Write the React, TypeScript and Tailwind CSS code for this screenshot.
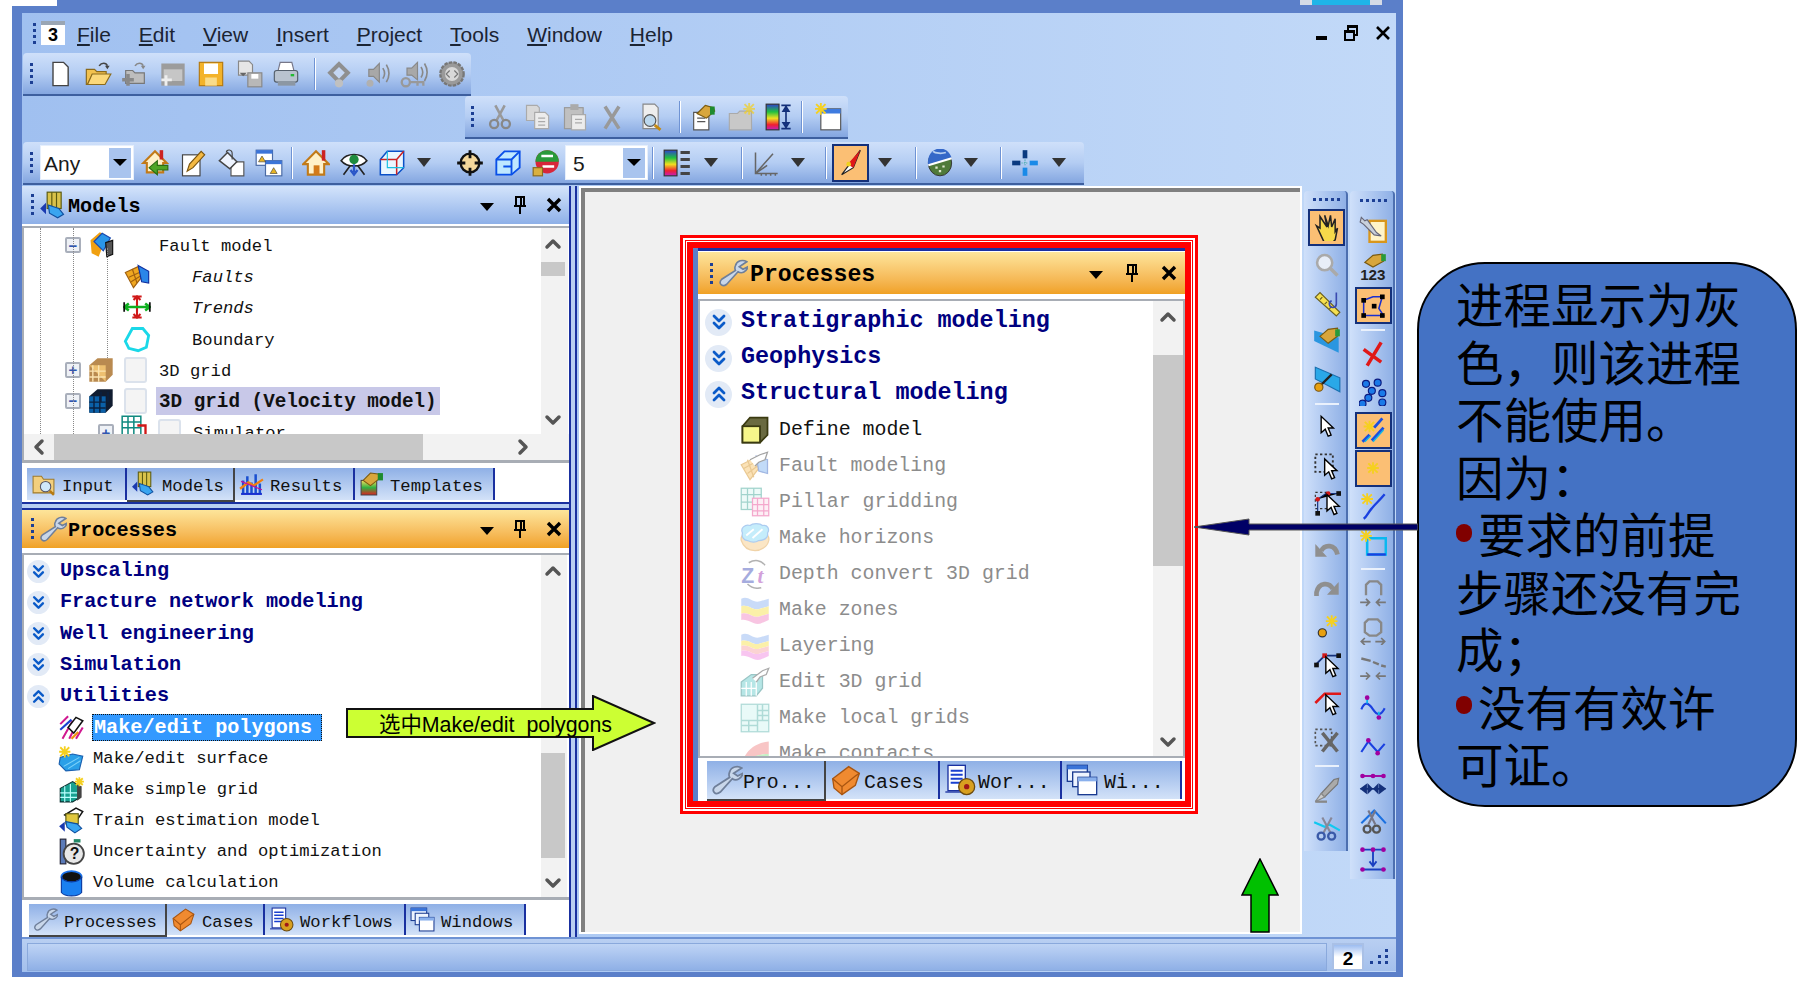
import React from "react";
import { ChevronUp, ChevronDown, ChevronLeft, ChevronRight, ChevronsDown, ChevronsUp } from "lucide-react";

const burst = (x: number, y: number, s = 4) => (
  <g stroke="#f5d020" strokeWidth="1.6">
    <path d={`M${x - s} ${y}H${x + s}M${x} ${y - s}V${y + s}M${x - s + 1} ${y - s + 1}L${x + s - 1} ${y + s - 1}M${x + s - 1} ${y - s + 1}L${x - s + 1} ${y + s - 1}`} />
  </g>
);
const cursor = (x: number, y: number) => (
  <path d={`M${x} ${y}v14l3.5-3 2.5 6 2.5-1-2.5-6h4.5z`} fill="#fff" stroke="#000" strokeWidth="1.2" />
);
const node = (x: number, y: number, c = "#a000a0") => <circle cx={x} cy={y} r="2" fill={c} />;
const grayF = "#a8a8a8";

const icons: Record<string, React.ReactNode> = {
  doc: <path d="M6 2h9l4 4v16H6z" fill="#fff" stroke="#444" strokeWidth="1.2" />,
  open: <><path d="M2 8h7l2 2h8v3H7L3 21H2z" fill="#f2c14e" stroke="#8a6a1c" /><path d="M7 12h16l-5 9H3z" fill="#fbd87a" stroke="#8a6a1c" /><path d="M13 5c2-3 6-3 7 0" fill="none" stroke="#444" strokeWidth="1.4" /><path d="M18 5h4l-2 3z" fill="#444" /></>,
  openAdd: <><path d="M4 9h6l2 2h8v9H4z" fill="#bdbdbd" stroke="#777" /><path d="M12 5c2-3 6-3 7 0" fill="none" stroke="#888" strokeWidth="1.4" /><path d="M17 5h4l-2 3z" fill="#888" /><path d="M1 17h10M6 12v10" stroke="#888" strokeWidth="3" /></>,
  folderGray: <><rect x="2" y="3" width="20" height="19" fill="#9c9c9c" /><path d="M4 8h16v10H4z" fill="#c6c6c6" /><path d="M2 17h9M6 13v9" stroke="#eee" strokeWidth="2.5" /></>,
  save: <><rect x="2" y="2" width="20" height="20" fill="#f3b32a" stroke="#b57a10" /><rect x="6" y="3" width="12" height="9" fill="#fff" /><rect x="7" y="15" width="10" height="7" fill="#f9dc8a" /></>,
  saveAs: <><path d="M3 1h9l3 3v9H3z" fill="#e6e6e6" stroke="#888" /><rect x="11" y="11" width="12" height="12" fill="#b8b8b8" stroke="#888" /><rect x="14" y="12" width="6" height="4" fill="#fff" /><path d="M7 7v7l-3-3h6l-3 3" fill="#666" /></>,
  print: <><path d="M7 2h10l2 8H5z" fill="#fff" stroke="#778" /><rect x="2" y="9" width="20" height="10" rx="2" fill="#b9c3cf" stroke="#55606c" /><rect x="5" y="18" width="15" height="4" fill="#8c97a3" /><rect x="16" y="12" width="3" height="2" fill="#22bb33" /></>,
  diamonds: <><path d="M12 1l10 10-10 10L2 11z" fill="#8f8f8f" /><path d="M12 6l5 5-5 5-5-5z" fill="#c4d6f3" /><circle cx="12" cy="20" r="3.5" fill="#c0c0c0" /></>,
  speaker: <><path d="M5 8h4l5-5v16l-5-5H5z" fill={grayF} stroke="#888" /><path d="M17 7c2 3 2 6 0 9M20 4c3 5 3 10 0 15" fill="none" stroke="#888" strokeWidth="1.4" /><circle cx="6" cy="20" r="3" fill="#b0b0b0" /></>,
  speakerKey: <><path d="M6 7h4l5-5v15l-5-4H6z" fill={grayF} stroke="#888" /><path d="M18 6c2 3 2 6 0 9M21 3c3 5 3 10 0 15" fill="none" stroke="#888" strokeWidth="1.4" /><circle cx="5" cy="19" r="3.5" fill="none" stroke="#999" strokeWidth="2" /><path d="M8 19h12v3M15 19v3" stroke="#999" strokeWidth="2" fill="none" /></>,
  gear: <><circle cx="12" cy="12" r="10" fill="#9a9a9a" stroke="#777" strokeDasharray="3 1" strokeWidth="2" /><circle cx="12" cy="12" r="6" fill="#d9d9d9" /><path d="M10 9l-3 3 3 3M14 9l3 3-3 3" stroke="#777" fill="none" /></>,
  cut: <><path d="M8 2l7 13M16 2L9 15" stroke="#999" strokeWidth="2.2" /><circle cx="7" cy="18" r="3.5" fill="none" stroke="#888" strokeWidth="2" /><circle cx="17" cy="18" r="3.5" fill="none" stroke="#888" strokeWidth="2" /></>,
  copy: <><path d="M3 2h9l2 2v11H3z" fill="#d8d8d8" stroke="#aaa" /><path d="M10 8h9l3 3v11H10z" fill="#ececec" stroke="#aaa" /><path d="M13 13h6M13 16h6M13 19h6" stroke="#aaa" /></>,
  paste: <><rect x="3" y="4" width="16" height="18" fill="#c0c0c0" stroke="#999" /><rect x="8" y="1" width="7" height="5" fill="#aaa" /><path d="M9 10h12v13H9z" fill="#ececec" stroke="#aaa" /><path d="M12 14h6M12 17h6" stroke="#aaa" /></>,
  xGray: <path d="M6 3l12 19M18 3L6 22" stroke="#999" strokeWidth="3" />,
  preview: <><path d="M6 1h10l3 3v18H6z" fill="#eee" stroke="#888" /><circle cx="12" cy="15" r="5" fill="#bcd8ee" stroke="#555" /><path d="M16 19l5 4" stroke="#c58a10" strokeWidth="2.4" /></>,
  templ: <><path d="M4 8h13v15H4z" fill="#fff" stroke="#555" /><path d="M7 13h7M7 16h7" stroke="#555" /><path d="M7 9l7-7 7 2 1 3-7 6z" fill="#d8a63c" stroke="#7a5a10" /><rect x="18" y="3" width="4" height="7" fill="#1e8b2e" /></>,
  folderNew: <><path d="M2 9h7l2-2h10v16H2z" fill="#c8c8c8" stroke="#aaa" /><g opacity="0.7">{burst(19, 5, 5)}</g></>,
  colorScale: <><defs><linearGradient id="rb" x1="0" y1="0" x2="0" y2="1"><stop offset="0" stopColor="#3040d0" /><stop offset=".3" stopColor="#20c040" /><stop offset=".55" stopColor="#f0e020" /><stop offset=".8" stopColor="#f02030" /><stop offset="1" stopColor="#c020c0" /></linearGradient></defs><rect x="1" y="1" width="11" height="22" fill="url(#rb)" stroke="#333" /><path d="M14 2h8M14 22h8M18 3v18M15.5 7L18 3l2.500 4zM15.500 17L18 21l2.500-4z" stroke="#14307a" strokeWidth="1.4" fill="#2a56c8" /></>,
  newWin: <><rect x="5" y="5" width="17" height="18" fill="#fff" stroke="#555" /><rect x="5" y="5" width="17" height="4" fill="#3e7be0" />{burst(5, 5, 5)}</>,
  homeArrow: <><path d="M2 12L12 2l10 10h-3v8H5v-8z" fill="#fff1c9" stroke="#c27a18" strokeWidth="1.8" /><rect x="16" y="1" width="3" height="8" fill="#c22" /><path d="M23 14h-9v-4L7 16l7 6v-4h9z" fill="#4ea526" stroke="#2b6b12" /></>,
  edit: <><rect x="3" y="5" width="15" height="18" fill="#fff" stroke="#444" /><path d="M7 19l2-6L19 2l3 3-10 11z" fill="#f4b942" stroke="#7a5510" /></>,
  paint: <><path d="M12 11h11v12H12z" fill="#fff" stroke="#555" /><path d="M2 10l7-7 8 8-6 6z" fill="#eef4ff" stroke="#444" strokeWidth="1.3" /><path d="M8 3c0-3 5-3 5 1v5" fill="none" stroke="#444" /></>,
  windows: <><rect x="1" y="1" width="14" height="13" fill="#fff" stroke="#4a6aa5" /><rect x="1" y="1" width="14" height="3" fill="#3b74d8" /><rect x="9" y="10" width="14" height="13" fill="#fff" stroke="#4a6aa5" /><rect x="9" y="10" width="14" height="3" fill="#3b74d8" /><path d="M3 11l3-5 3 5zM13 21l3-5 3 5z" fill="#e7b321" stroke="#333" strokeWidth=".5" /></>,
  house: <><path d="M1 13L12 2l11 11h-4v9H5v-9z" fill="#fff1c9" stroke="#c27a18" strokeWidth="1.8" /><rect x="17" y="1" width="3" height="9" fill="#c22" /><rect x="10" y="14" width="5" height="8" fill="#d37a1a" /></>,
  eye: <><path d="M1 10c5-7 17-7 22 0-5 6-17 6-22 0z" fill="#fff" stroke="#222" strokeWidth="1.4" /><circle cx="12" cy="9" r="4" fill="#1e8b3e" /><path d="M3 22l6-8M21 22l-6-8" stroke="#222" strokeWidth="1.4" /><path d="M12 13v7M9 18l3 4 3-4" stroke="#2a56c8" strokeWidth="2" fill="none" /></>,
  cube: <><path d="M2 9l6-7h14v14l-6 6H2z" fill="#eaf6ff" stroke="#0a50c8" strokeWidth="1.3" /><path d="M2 9h14v13M16 9l6-7" stroke="#c22" strokeWidth="1.3" fill="none" /><path d="M8 2v14h14" stroke="#1ac0e0" strokeWidth="1" fill="none" /></>,
  target: <><circle cx="12" cy="12" r="8" fill="#f4d79a" stroke="#111" strokeWidth="2" /><path d="M12 1v7M12 16v7M1 12h7M16 12h7" stroke="#111" strokeWidth="2.4" /></>,
  blueCube: <><path d="M2 9l7-7h13v14l-7 6H2z" fill="#bfe8ff" stroke="#0a50e8" strokeWidth="1.6" /><path d="M2 9h13v13M15 9l7-7M8 15h7" stroke="#0a50e8" strokeWidth="1.6" fill="none" /></>,
  ball: <><circle cx="13" cy="11" r="10" fill="#d8263a" /><path d="M3 11a10 10 0 0 1 20 0z" fill="#2a9a3a" /><path d="M8 6h10M9 15h10" stroke="#fff" strokeWidth="2" /><rect x="1" y="16" width="8" height="7" fill="#d9b040" stroke="#8a6a1c" /></>,
  colorList: <><rect x="1" y="1" width="11" height="22" fill="url(#rb)" stroke="#333" /><path d="M15 3h8M15 9h8M15 15h8M15 21h8" stroke="#444" strokeWidth="2.4" /></>,
  axes: <path d="M3 3v18h19M3 21L18 4M3 21l10-7M8 21v2M12 21v2M16 21v2M20 21v2" stroke="#666" strokeWidth="1.3" fill="none" />,
  compass: <><path d="M20 1L4 22l10-6z" fill="#fff" stroke="#222" /><path d="M20 1L9 13l5 3z" fill="#e01818" /><circle cx="10" cy="13" r="2" fill="#f0d020" /></>,
  globe: <><ellipse cx="12" cy="12" rx="10" ry="11" fill="#4f7a3a" stroke="#333" strokeWidth=".8" /><path d="M2 14A10 11 0 0 1 22 8z" fill="#3568c8" /><path d="M6 2c2 2 8 2 11 1" stroke="#b8d0f0" strokeWidth="1.500" fill="none" /><path d="M2 14L22 8" stroke="#fff" strokeWidth="1.800" /><path d="M8 16h2M14 15h2M11 19h2" stroke="#dfe8d0" strokeWidth="1.800" /></>,
  cross: <><rect x="10" y="1" width="4" height="7" fill="#0a3a80" /><rect x="10" y="16" width="4" height="7" fill="#1a8ae8" /><rect x="1" y="10" width="7" height="4" fill="#0a3a80" /><rect x="16" y="10" width="7" height="4" fill="#1a8ae8" /><path d="M9 12h6M12 9v6" stroke="#4aa" strokeDasharray="1 1" /></>,
  hand: <path d="M6 3l6 9-2-10 3 9 2-9 1 10 3-7 0 11 2-3-2 10-3 3H10L3 11l3 2z" fill="#f6d94a" stroke="#222" strokeWidth="1.300" />,
  magnifier: <><circle cx="10" cy="10" r="6.500" fill="#e8eef8" stroke="#aaa" strokeWidth="2.200" /><path d="M15 15l6 6" stroke="#aaa" strokeWidth="3" /></>,
  ruler: <><path d="M2 7l4-4 17 17-3 3z" fill="#f5e050" stroke="#6a6020" /><path d="M6 9l2-2M10 13l2-2M14 17l2-2" stroke="#6a6020" /><path d="M20 3v10M20 13a3 3 0 1 1-4-3" stroke="#3a4ab0" strokeWidth="1.400" fill="none" /></>,
  handSurface: <><path d="M1 12l21 10V9L1 3z" fill="#2a96e0" /><path d="M6 8l7-6 8-1 1 6-9 7z" fill="#d8a63c" stroke="#7a5a10" /><rect x="19" y="2" width="4" height="6" fill="#2a9a3a" /></>,
  arrowPlane: <><path d="M2 2l21 9v12L2 12z" fill="#2aa8e8" stroke="#1a70b0" /><path d="M6 18L16 8" stroke="#222" strokeWidth="2" /><circle cx="5" cy="19" r="3.500" fill="#e8a010" stroke="#7a5510" /></>,
  cursor: cursor(7, 2),
  selectCursor: <><rect x="2" y="2" width="15" height="15" fill="none" stroke="#333" strokeWidth="1.600" strokeDasharray="2 2" />{cursor(10, 6)}</>,
  nodeCursor: <><rect x="2" y="2" width="12" height="14" fill="none" stroke="#333" strokeDasharray="2 2" /><path d="M4 8v11M4 8l7-5h11" stroke="#14307a" /><rect x="2" y="18" width="4" height="4" fill="#111" /><rect x="20" y="1" width="4" height="4" fill="#111" /><circle cx="4" cy="8" r="2" fill="#d01818" /><circle cx="13" cy="3" r="2" fill="#d01818" />{cursor(12, 4)}</>,
  undo: <><path d="M7 12c3-6 12-6 14 3" stroke="#8f8f8f" strokeWidth="4" fill="none" /><path d="M2 6v11h10z" fill="#8f8f8f" /></>,
  redo: <><path d="M17 12c-3-6-12-6-14 3v3" stroke="#8f8f8f" strokeWidth="4" fill="none" /><path d="M22 6v11H12z" fill="#8f8f8f" /></>,
  dotStar: <><circle cx="8" cy="17" r="3.500" fill="#e8a010" stroke="#333" />{burst(16, 7, 5)}</>,
  nodeArrow: <><path d="M3 11l7-7h13" stroke="#14307a" strokeWidth="1.600" fill="none" /><rect x="1" y="10" width="4" height="4" fill="#111" /><rect x="20" y="2" width="4" height="4" fill="#111" /><rect x="8" y="2" width="4" height="4" fill="#d01818" />{cursor(11, 5)}</>,
  redArrow: <><path d="M2 12L10 4h14" stroke="#e01818" strokeWidth="2.200" fill="none" />{cursor(11, 5)}</>,
  dashX: <><rect x="2" y="2" width="14" height="14" fill="none" stroke="#555" strokeWidth="1.400" strokeDasharray="2 2" /><path d="M8 21L21 5M8 5l13 16" stroke="#666" strokeWidth="3" /></>,
  pen: <><path d="M22 2l-4 1L7 15l3 3L21 7z" fill="#aaa" stroke="#777" /><path d="M2 22l5-7 3 3z" fill="#ccc" stroke="#888" /><path d="M2 22h10" stroke="#888" strokeWidth="2" /></>,
  scissorsBlue: <><path d="M1 7l9 4 4-2 9 5" stroke="#10c8f0" strokeWidth="1.800" fill="none" /><path d="M8 3l7 13M16 3L9 16" stroke="#889" strokeWidth="1.800" /><circle cx="7" cy="19" r="3" fill="none" stroke="#3a5aa8" strokeWidth="2" /><circle cx="16" cy="19" r="3" fill="none" stroke="#3a5aa8" strokeWidth="2" /></>,
  wrenchDoc: <><rect x="9" y="5" width="14" height="18" fill="#fff4c8" stroke="#d8961c" strokeWidth="2" /><path d="M2 2l3 3 2-1 8 11 4 3-6-1L4 8 1 6z" fill="#c8d0dc" stroke="#667" /></>,
  hand123: <><path d="M5 8l7-6 8-1 1 6-9 5z" fill="#d8a63c" stroke="#7a5a10" /><rect x="19" y="1" width="4" height="6" fill="#2a9a3a" /><text x="1" y="23" fontSize="13" fontWeight="700" fontFamily="Liberation Sans" fill="#222">123</text></>,
  poly: <><path d="M4 8l8-3 8 0-3 10 4 6H4z" fill="none" stroke="#1a30d0" strokeWidth="1.300" /><rect x="2" y="6" width="4" height="4" /><rect x="18" y="3" width="4" height="4" /><rect x="11" y="11" width="4" height="4" /><rect x="2" y="19" width="4" height="4" /><rect x="18" y="19" width="4" height="4" /></>,
  redX: <path d="M19 2L7 22M4 8l15 11" stroke="#e01818" strokeWidth="3" fill="none" />,
  dots: <>{[[6, 5], [16, 4], [11, 11], [20, 13], [8, 17], [3, 22], [20, 21]].map(([x, y], i) => <circle key={i} cx={x} cy={y} r="3" fill="#1a7ae8" stroke="#0a1a80" />)}</>,
  streaks: <>{burst(9, 9, 5)}<path d="M3 22l6-6M11 21l10-11M13 10l7-8" stroke="#1a50e0" strokeWidth="2.400" /><path d="M5 22l5-5M12 22l9-10" stroke="#10b8e8" strokeWidth="1.200" /></>,
  star: burst(12, 12, 5),
  starLine: <>{burst(7, 6, 5)}<path d="M4 23c3-2 4-6 7-9 3-4 6-6 11-12" stroke="#1a40e0" strokeWidth="2" fill="none" /></>,
  starRect: <><path d="M7 7h16v14H7z" fill="none" stroke="#0ab8f0" strokeWidth="2.200" /><path d="M7 21h16" stroke="#1a40e0" strokeWidth="2" />{burst(6, 5, 5)}</>,
  shapeIn: <><path d="M6 14V5l3-3h7l3 3v9" fill="none" stroke="#888" strokeWidth="2" /><path d="M1 20h8M6 17l3 3-3 3M23 20h-8M18 17l-3 3 3 3" stroke="#777" strokeWidth="1.500" fill="none" /></>,
  shapeOut: <><path d="M5 13V5l3-3h8l3 3v8l-4 3H9z" fill="none" stroke="#888" strokeWidth="2" /><path d="M2 21h8M5 18l-3 3 3 3M22 21h-8M19 18l3 3-3 3" stroke="#777" strokeWidth="1.500" fill="none" /></>,
  dashes: <><path d="M2 3l8 2M12 6l5 2M19 9l4 1" stroke="#777" strokeWidth="2" /><path d="M1 18h8M6 15l3 3-3 3M23 18h-8M18 15l-3 3 3 3" stroke="#777" strokeWidth="1.500" fill="none" /></>,
  wave: <><path d="M2 14c3-7 6-6 10 0s7 5 10-1" stroke="#1a40e0" strokeWidth="1.800" fill="none" /><path d="M7 5v4M17 20v-4" stroke="#0ab8f0" strokeWidth="1.500" />{node(7, 4)}{node(17, 21)}</>,
  wave2: <><path d="M2 18l6-9 8 9 6-7" stroke="#1a40e0" strokeWidth="1.800" fill="none" />{node(8, 8)}{node(16, 19)}</>,
  arrowsPurple: <><path d="M2 6h20" stroke="#a000a0" strokeWidth="1.600" />{node(3, 6)}{node(12, 6)}{node(21, 6)}<path d="M1 17h22M2 17l4-3v6zM11 17l-3-3v6zM13 17l3-3v6zM22 17l-4-3v6z" stroke="#14307a" strokeWidth="1.600" fill="#14307a" /></>,
  scissorsTri: <><path d="M2 14L13 3l10 11" stroke="#1a70e0" strokeWidth="1.800" fill="none" /><path d="M8 3l6 12M14 3L8 15" stroke="#778" strokeWidth="1.800" /><circle cx="7" cy="19" r="3" fill="none" stroke="#555" strokeWidth="2" /><circle cx="15" cy="19" r="3" fill="none" stroke="#555" strokeWidth="2" /></>,
  tShape: <><path d="M2 4h20M2 21h20M12 4v13M9 14l3 4 3-4" stroke="#1a40c0" strokeWidth="1.600" fill="none" />{node(3, 4)}{node(12, 4)}{node(21, 4)}{node(3, 21)}{node(21, 21)}</>,
  models: <><rect x="7" y="1" width="12" height="14" fill="#d9c24a" stroke="#5a5a10" /><path d="M11 1v14M15 1v14" stroke="#5a5a10" /><path d="M8 12l9 3 4 5-5 3-7-4z" fill="#39a5f0" stroke="#1050a0" /><path d="M1 15l5-5v10z" fill="#1a3ab0" /></>,
  wrench: <path d="M23 3c-3-2-8-1-9 3-1 2 0 4 0 4L3 17c-3 3 0 7 4 4l9-10c3 2 7 0 8-4l-4 2-3-2z" fill="#c9d7ea" stroke="#6f7f9a" strokeWidth="1.300" />,
  faultModel: <><path d="M3 8l8-7 6 3-7 18-6-3z" fill="#f0a010" /><path d="M6 9l7-7 7 4-6 11z" fill="#2a96e8" stroke="#1a4ab0" /><path d="M16 10l6-2v12l-5 2z" fill="#555" stroke="#111" /></>,
  faults: <><path d="M2 9l11-5 3 9-7 9z" fill="#f0a820" stroke="#a06010" /><path d="M5 13l9-4M7 17l8-5M8 6l4 12" stroke="#a06010" /><path d="M13 3l9 5v10l-6-1z" fill="#2a86e8" stroke="#1030a0" /></>,
  trends: <><path d="M12 2v20M8 3h8M8 21h8M9 6l3-3 3 3M9 18l3 3 3-3" stroke="#d01818" strokeWidth="1.800" fill="none" /><path d="M1 12h22M5 9l-4 3 4 3M19 9l4 3-4 3" stroke="#10b020" strokeWidth="2.200" fill="none" /><path d="M1 8v8M23 8v8" stroke="#111" strokeWidth="1.500" /></>,
  boundary: <path d="M8 3h9l5 6-2 10-7 3-8-2-3-6z" fill="#fff" stroke="#1ad8e8" strokeWidth="2.400" />,
  grid3d: <><path d="M2 8l7-6h13v14l-6 6H2z" fill="#b98a50" /><path d="M2 8h14v14z" fill="#eec070" /><path d="M5 8v14M10 8v14M2 13h14M2 18h14" stroke="#fbe3b0" strokeWidth="1.200" /></>,
  gridDark: <><path d="M2 8l7-6h13v14l-6 6H2z" fill="#101c30" /><path d="M2 8h14v14H2z" fill="#0a60a8" /><path d="M6 8v14M11 8v14M2 13h14M2 18h14M12 4v9M18 4v9" stroke="#0a2040" strokeWidth="1.200" /></>,
  simulator: <><path d="M1 1h16v16H1zM1 6h16M1 11h16M6 1v16M11 1v16" fill="none" stroke="#108a80" strokeWidth="1.300" /><path d="M14 9h7v11" stroke="#d01818" strokeWidth="2" fill="none" /></>,
  input: <><path d="M2 5h8l2 3h10v13H2z" fill="#f2cf7e" stroke="#a07a28" /><circle cx="14" cy="15" r="5" fill="#cfe8fa" stroke="#556" /><path d="M18 19l4 4" stroke="#b87a10" strokeWidth="2.400" /></>,
  results: <><path d="M2 22h20" stroke="#1a30d0" strokeWidth="2" /><path d="M4 21V9M8 21V5M12 21V11M16 21V3M20 21V12" stroke="#1a50d0" strokeWidth="2.400" /><path d="M1 17l8-6 5 3 9-6" stroke="#f08010" strokeWidth="2.200" fill="none" /><path d="M2 10l20 8" stroke="#c010a0" strokeWidth="1.200" /></>,
  templates: <><rect x="2" y="9" width="15" height="14" fill="url(#tpl)" stroke="#444" /><defs><linearGradient id="tpl" x1="0" y1="0" x2="0" y2="1"><stop offset="0" stopColor="#f8e060" /><stop offset=".5" stopColor="#30b040" /><stop offset="1" stopColor="#e02020" /></linearGradient></defs><path d="M4 9l7-7 9 1 0 4-9 7z" fill="#d8a63c" stroke="#7a5a10" /><rect x="18" y="2" width="5" height="7" fill="#1e8b2e" /></>,
  cases: <><path d="M2 11l12-9 8 5-3 9-10 7-6-5z" fill="#f08a30" stroke="#a85510" /><path d="M2 11l7 6 10-8 3-2M9 17v6" stroke="#a85510" fill="none" /></>,
  workflows: <><rect x="3" y="1" width="13" height="19" fill="#fff" stroke="#1a30a0" /><path d="M5 5h9M5 8h9M5 11h9M5 14h9" stroke="#1a40d0" strokeWidth="1.500" /><path d="M1 21h12" stroke="#1a30a0" /><circle cx="17" cy="17" r="6" fill="#d8a020" stroke="#6a4a10" /><circle cx="17" cy="17" r="2" fill="#a01818" /></>,
  windowsTab: <><rect x="1" y="1" width="15" height="12" fill="#eef4ff" stroke="#1a3a90" /><rect x="1" y="1" width="15" height="3" fill="#3b74d8" /><rect x="5" y="6" width="13" height="11" fill="#eef4ff" stroke="#1a3a90" /><rect x="9" y="10" width="14" height="13" fill="#fff" stroke="#1a3a90" /><rect x="9" y="10" width="14" height="3" fill="#8ab0ec" /></>,
  polygons: <><path d="M2 9l7-7M4 22L13 6M10 22l7-14M16 22l6-10" stroke="#d01890" strokeWidth="1.800" /><path d="M2 14L12 5" stroke="#1a40d0" strokeWidth="1.800" /><path d="M9 12l7-9 6 3-8 11z" fill="#fff" stroke="#111" strokeWidth="1.400" /><path d="M12 22l6-6" stroke="#f09010" strokeWidth="2" /></>,
  surface: <><path d="M2 11l11-3 9 2-3 12-12 1-6-6z" fill="#2aa0e8" stroke="#1a60b0" /><path d="M5 19L19 11M9 21l11-7" stroke="#7ad0f8" />{burst(6, 6, 5)}</>,
  simpleGrid: <><path d="M2 11l11-6 5 3v12l-5 3H2z" fill="#18a090" stroke="#0a3030" /><path d="M6 9v14M11 7v16M2 15h15M2 19h15" stroke="#bff" /><path d="M17 8l4 1v10l-4 3z" fill="#444" />{burst(19, 5, 4)}</>,
  train: <><path d="M6 7L16 1l6 3-6 9z" fill="#fff" stroke="#111" strokeWidth="1.300" /><rect x="7" y="6" width="11" height="9" fill="#e0c840" stroke="#5a5a10" /><path d="M7 13l10 2 4 4-6 4-7-5z" fill="#39a5f0" stroke="#1050a0" /><path d="M1 17l5-4v9z" fill="#1a3ab0" /></>,
  uncertainty: <><rect x="2" y="1" width="5" height="22" fill="#5a7ab8" stroke="#223" /><circle cx="14" cy="14" r="9" fill="#e8e8e8" stroke="#444" strokeWidth="1.600" /><text x="10.500" y="19" fontSize="14" fontWeight="700" fontFamily="Liberation Sans" fill="#111">?</text><rect x="14" y="1" width="6" height="3" fill="#286" /></>,
  volume: <><ellipse cx="12" cy="6" rx="9" ry="5" fill="#111" stroke="#1a70e8" strokeWidth="1.500" /><path d="M3 6v14c3 4 15 4 18 0V6c-2 6-16 6-18 0z" fill="#1a80f0" stroke="#0a3aa0" /></>,
  defineModel: <><path d="M2 9l6-7h14v14l-6 6H2z" fill="#6a6a40" stroke="#3a3a10" strokeWidth="1.400" /><rect x="2" y="9" width="14" height="13" fill="#f6f68a" stroke="#3a3a10" strokeWidth="1.400" /></>,
  faultMod: <><path d="M1 11l10-5 4 8-7 9z" fill="#f8c060" stroke="#d08810" /><path d="M3 14l9-5M6 18l8-6M6 7l5 14" stroke="#d08810" /><path d="M13 4l9 3v11l-7-2z" fill="#7ab0f0" stroke="#3060c0" /><path d="M8 7l8-4 6-2-2 6-5 2-3 3" fill="#fff" stroke="#333" /></>,
  pillar: <><rect x="1" y="1" width="16" height="17" fill="#d8f4f0" stroke="#30a090" /><path d="M6 1v17M11 1v17M1 6h16M1 12h16" stroke="#30a090" /><rect x="10" y="9" width="13" height="14" fill="#fbdcea" stroke="#e84090" /><path d="M14 9v14M19 9v14M10 14h13M10 19h13" stroke="#e84090" /></>,
  horizons: <><path d="M1 14c2 6 6 8 11 8s10-3 11-8-4-7-11-7S0 9 1 14z" fill="#f8c880" stroke="#e0a040" /><path d="M2 8c-2-4 2-7 6-6 2-2 8-2 10 0 4-1 6 3 4 6 1 4-3 6-7 6-3 2-7 1-9 0-3 0-5-3-4-6z" fill="#80d8f8" stroke="#4a90e0" /><path d="M5 10l6-5M10 12l8-7" stroke="#fff" strokeWidth="1.500" /></>,
  depth: <><text x="1" y="19" fontSize="17" fontWeight="700" fontFamily="Liberation Sans" fill="#3a48b8">Z</text><text x="14" y="19" fontSize="17" fontWeight="700" fontFamily="Liberation Serif" fill="#a030b0" fontStyle="italic">t</text><path d="M7 3c5-3 10-2 13 2M17 23c-4 1-8 0-11-3" stroke="#555" fill="none" strokeWidth="1.200" /></>,
  zones: <><path d="M1 3c6-3 9 4 15 2l7-2v6l-7 2c-6 2-9-4-15-2z" fill="#8ab0f0" /><path d="M1 9c6-2 9 4 15 2l7-2v6l-7 2c-6 2-9-4-15-2z" fill="#f8e040" /><path d="M1 15c6-2 9 4 15 2l7-2v5l-7 3c-6 1-9-4-15-3z" fill="#f080c0" /></>,
  layering: <><path d="M1 3c6-3 9 4 15 2l7-2v5l-7 2C10 12 7 6 1 8z" fill="#8ab0f0" /><path d="M1 8c6-2 9 4 15 2l7-2v4l-7 2c-6 2-9-4-15-2z" fill="#f8e040" /><path d="M1 12c6-2 9 4 15 2l7-2v4l-7 2c-6 2-9-4-15-2z" fill="#f8a0a0" /><path d="M1 16c6-2 9 4 15 2l7-2v4l-7 3c-6 1-9-4-15-3z" fill="#f080e0" /></>,
  edit3d: <><path d="M1 12l8-6h9v11l-5 6H1z" fill="#60c8c8" stroke="#208080" /><path d="M5 12v11M9 12v11M1 17h12M13 12v11" stroke="#fff" /><path d="M10 9l8-6 5-2-2 5-5 2-3 4" fill="#fff" stroke="#444" /></>,
  localGrids: <><rect x="1" y="1" width="22" height="22" fill="#d0f4f0" stroke="#50b0a8" /><path d="M14 1v22M1 14h22M7 14v9M18 1v13M1 18h13M14 6h9M14 10h9" stroke="#50b0a8" strokeWidth="1.200" /></>,
  contacts: <><path d="M1 22C3 10 12 3 23 2v10C14 12 6 16 3 22z" fill="#f08080" /><path d="M1 22c3-6 11-10 22-10v11H1z" fill="#80e080" /></>,
};

const I = ({ n, s = 28, className = "" }: { n: string; s?: number; className?: string }) => (
  <svg width={s} height={s} viewBox="0 0 24 24" className={`shrink-0 ${className}`}>
    {icons[n]}
  </svg>
);

const Grip = ({ w = "w-[18px]" }: { w?: string }) => (
  <div className={`${w} flex flex-col items-center justify-center gap-[3px]`}>
    {[0, 1, 2, 3].map((i) => (
      <span key={i} className="w-[3px] h-[3px] bg-[#1c3f94]" />
    ))}
  </div>
);

const Tool = ({ n, className = "" }: { n: string; className?: string }) => (
  <div className={`w-[38px] flex items-center justify-center ${className}`}>
    <I n={n} />
  </div>
);

const Sep = ({ className = "" }: { className?: string }) => (
  <div className={`w-[10px] flex justify-center ${className}`}>
    <span className="w-[2px] h-[32px] bg-[#6f93d4] border-r border-white" />
  </div>
);

const DD = ({ className = "" }: { className?: string }) => (
  <div className={`w-[26px] flex items-center justify-center ${className}`}>
    <span className="w-0 h-0 border-l-[7px] border-r-[7px] border-t-[9px] border-l-transparent border-r-transparent border-t-[#333]" />
  </div>
);

const Combo = ({ value, w, arrow, pad }: { value: string; w: string; arrow: string; pad: string }) => (
  <div className={`${w} h-[35px] bg-white border border-[#e6effc] flex items-center justify-between font-['Liberation_Sans'] text-[21px] text-[#1a1a1a]`}>
    <span className={`${pad} pt-[2px]`}>{value}</span>
    <span className={`${arrow} h-[30px] mr-[2px] bg-[#a9c4ee] flex items-center justify-center`}>
      <span className="w-0 h-0 border-l-[7px] border-r-[7px] border-t-[7px] border-l-transparent border-r-transparent border-t-black" />
    </span>
  </div>
);

const toolbarBg = "h-[43px] flex items-center rounded-t-[4px] bg-linear-to-b from-[#cfe0fa] via-[#b4cdf3] to-[#84a6e0] border-b-2 border-[#3d5f9f]";

const Menu = () => {
  const items = ["File", "Edit", "View", "Insert", "Project", "Tools", "Window", "Help"];
  return (
    <div className="h-[40px] flex items-center pl-[3px] pr-[2px]">
      <Grip />
      <div className="w-[24px] h-[24px] ml-[-2px] mr-[12px] bg-white border-t-[4px] border-[#9aa6b4] flex items-center justify-center font-['Liberation_Sans'] font-bold text-[18px] leading-none">
        3
      </div>
      <div className="flex gap-[28px] pt-[3px] font-['Liberation_Sans'] text-[21px] text-[#1b2433]">
        {items.map((m) => (
          <span key={m}>
            <span className="underline underline-offset-2">{m[0]}</span>
            {m.slice(1)}
          </span>
        ))}
      </div>
      <div className="ml-auto flex items-center gap-[17px] pr-[3px]">
        <span className="w-[11px] h-[4px] bg-black mt-[10px]" />
        <span className="relative w-[14px] h-[16px]">
          <span className="absolute right-0 top-0 w-[11px] h-[11px] border-2 border-t-[3px] border-black" />
          <span className="absolute left-0 bottom-0 w-[11px] h-[11px] bg-[#bcd4f7] border-2 border-t-[3px] border-black" />
        </span>
        <svg width="16" height="16" viewBox="0 0 16 16"><path d="M2 2l12 12M14 2L2 14" stroke="#000" strokeWidth="2.600" /></svg>
      </div>
    </div>
  );
};

const Toolbars = () => (
  <>
    <div className={`${toolbarBg} w-[448px] ml-px`}>
      <Grip />
      {["doc", "open", "openAdd", "folderGray", "save", "saveAs", "print"].map((n) => <Tool key={n} n={n} />)}
      <Sep className="ml-[5px]" />
      {["diamonds", "speaker", "speakerKey", "gear"].map((n) => <Tool key={n} n={n} />)}
    </div>
    <div className={`${toolbarBg} w-[383px] ml-[443px]`}>
      <Grip w="w-[16px]" />
      {["cut", "copy", "paste", "xGray", "preview"].map((n) => <Tool key={n} n={n} />)}
      <Sep className="ml-[6px]" />
      {["templ", "folderNew", "colorScale"].map((n) => <Tool key={n} n={n} />)}
      <Sep />
      <Tool n="newWin" className="ml-[3px]" />
    </div>
    <div className={`${toolbarBg} w-[1061px] ml-px mt-[3px]`}>
      <Grip w="w-[17px]" />
      <Combo value="Any" w="w-[94px]" arrow="w-[22px]" pad="pl-[3px]" />
      <Tool n="homeArrow" className="ml-[2px]" />
      {["edit", "paint", "windows"].map((n) => <Tool key={n} n={n} />)}
      <Sep className="ml-[-1px]" />
      {["house", "eye", "cube"].map((n) => <Tool key={n} n={n} />)}
      <DD className="mr-[14px]" />
      {["target", "blueCube", "ball"].map((n) => <Tool key={n} n={n} />)}
      <Combo value="5" w="w-[83px]" arrow="w-[22px]" pad="pl-[7px]" />
      <Sep />
      <Tool n="colorList" />
      <DD className="ml-[2px]" />
      <Sep className="ml-[13px]" />
      <Tool n="axes" />
      <DD />
      <Sep className="ml-[10px]" />
      <div className="w-[37px] h-[38px] ml-[1px] bg-[#fbbf74] border-2 border-[#14307a] flex items-center justify-center">
        <I n="compass" />
      </div>
      <DD className="ml-[3px]" />
      <Sep className="ml-[13px]" />
      <Tool n="globe" />
      <DD className="ml-[-1px]" />
      <Sep className="ml-[12px]" />
      <Tool n="cross" />
      <DD className="ml-[2px]" />
    </div>
  </>
);

const TitleBar = ({ title, icon, orange = false, big = false }: { title: string; icon: string; orange?: boolean; big?: boolean }) => (
  <div className={`${big ? "h-[42px] pl-[6px]" : "h-[38px] pl-[3px]"} flex items-center ${orange ? "bg-linear-to-b from-[#fde59a] to-[#f0a122]" : "bg-linear-to-b from-[#d4e4fb] to-[#8eb0e8]"}`}>
    <Grip w="w-[14px]" />
    <I n={icon} s={big ? 30 : 28} className={big ? "mr-[2px]" : "mr-px"} />
    <span className={`font-['Liberation_Mono'] font-bold text-black pt-[4px] ${big ? "text-[23.200px]" : "text-[20.200px]"}`}>{title}</span>
    <div className={`ml-auto flex items-center ${big ? "gap-[21px] pr-[8px]" : "gap-[18px] pr-[7px]"}`}>
      <span className="w-0 h-0 border-l-[7px] border-r-[7px] border-t-[8px] mt-[4px] border-l-transparent border-r-transparent border-t-black" />
      <svg width="16" height="20" viewBox="0 0 16 20"><path d="M4 2h8v9H4zM2 11h12M8 11v8M9 3v7" fill="none" stroke="#000" strokeWidth="2" /></svg>
      <svg width="16" height="16" viewBox="0 0 16 16"><path d="M2 2l12 12M14 2L2 14" stroke="#000" strokeWidth="3.400" /></svg>
    </div>
  </div>
);

const VScroll = ({ w, spacer, thumb, rest = "" }: { w: string; spacer: string; thumb: string; rest?: string }) => (
  <div className={`${w} h-full bg-[#f2f2f2] flex flex-col`}>
    <div className={`${spacer} flex justify-center`}>
      <ChevronUp size={24} strokeWidth={3.500} className="text-[#555] mt-[4px]" />
    </div>
    <div className={`${thumb} bg-[#c8c8c8] shrink-0`} />
    <div className={`${rest} flex-1 flex justify-center items-end`}>
      <ChevronDown size={24} strokeWidth={3.500} className="text-[#555] mb-[2px]" />
    </div>
  </div>
);

type TreeRow = { expander?: "+" | "-"; icon: string; check?: boolean; text: string; pl: string; tw: string };
const treeRows: TreeRow[] = [
  { expander: "-", icon: "faultModel", text: "Fault model", pl: "pl-[41px]", tw: "" },
  { icon: "faults", text: "Faults", pl: "pl-[99px]", tw: "italic" },
  { icon: "trends", text: "Trends", pl: "pl-[99px]", tw: "italic" },
  { icon: "boundary", text: "Boundary", pl: "pl-[99px]", tw: "" },
  { expander: "+", icon: "grid3d", check: true, text: "3D grid", pl: "pl-[41px]", tw: "" },
  { expander: "-", icon: "gridDark", check: true, text: "3D grid (Velocity model)", pl: "pl-[41px]", tw: "font-bold text-[19.300px] bg-[#c8c8e8]" },
  { expander: "+", icon: "simulator", check: true, text: "Simulator", pl: "pl-[74px]", tw: "" },
];

const Expander = ({ sign }: { sign: "+" | "-" }) => (
  <span className="w-[16px] h-[16px] bg-[#eef1f6] border-2 border-[#a9afbb] rounded-[2px] flex items-center justify-center shrink-0 font-['Liberation_Sans'] font-bold text-[15px] leading-none text-[#3056b0]">
    {sign === "+" ? "+" : "−"}
  </span>
);

const Tree = () => (
  <div className="relative h-[206px] flex-1 overflow-hidden pt-[1.500px]">
    <span className="absolute left-[16px] top-0 h-full border-l border-dotted border-[#888]" />
    <span className="absolute left-[49px] top-0 h-full border-l border-dotted border-[#888]" />
    <span className="absolute left-[83px] top-[20px] h-[110px] border-l border-dotted border-[#888]" />
    {treeRows.map((r) => (
      <div key={r.text} className={`h-[31.200px] flex items-center ${r.pl}`}>
        {r.expander && <Expander sign={r.expander} />}
        {r.expander ? (
          <I n={r.icon} s={28} className={r.icon === "simulator" ? "ml-[7px] -mt-[6px]" : "ml-[6px]"} />
        ) : (
          <I n={r.icon} s={28} />
        )}
        {r.check ? (
          <span className="w-[23px] h-[26px] ml-[9px] bg-[#f4f4f4] border-2 border-[#dbe2ec] rounded-[3px]" />
        ) : null}
        <span
          className={`font-['Liberation_Mono'] text-[17.200px] whitespace-pre text-[#111] h-[28px] leading-[31px] px-[3px] ${r.check ? "ml-[9px]" : r.expander ? "ml-[41px]" : "ml-[38px]"} ${r.tw}`}
        >
          {r.text}
        </span>
      </div>
    ))}
  </div>
);

type Tab = { icon: string; label: string; w: string; active?: boolean; lp?: string };
const Tabs = ({ tabs, pl, big = false, h }: { tabs: Tab[]; pl: string; big?: boolean; h: string }) => (
  <div className={`${h} ${pl} bg-white flex`}>
    {tabs.map((t) => (
      <div
        key={t.label}
        className={`${t.w} flex items-center pl-[4px] border-r-2 bg-linear-to-b from-[#8fb0e6] to-[#d3e2f8] font-['Liberation_Mono'] text-[#111] whitespace-pre ${big ? "gap-[2px] text-[19.900px]" : "gap-[6px] text-[17.200px]"} ${t.active ? "h-full border-r-[#444] border-b-2 border-b-[#444]" : "border-r-[#1a30a0] mb-[2px]"}`}
      >
        <I n={t.icon} s={big ? 32 : 25} />
        <span className={`pt-[6px] ${t.lp ?? ""}`}>{t.label}</span>
      </div>
    ))}
  </div>
);

const Section = ({ label, open, big = false }: { label: string; open?: boolean; big?: boolean }) => (
  <div className={`flex items-center ${big ? "h-[36px] pl-[5px]" : "h-[31.200px] pl-[3px]"}`}>
    <span className={`rounded-full bg-[#e2eaf6] flex items-center justify-center shrink-0 ${big ? "w-[27px] h-[27px] mr-[9px]" : "w-[23px] h-[23px] mr-[10px]"}`}>
      {open ? <ChevronsUp size={big ? 24 : 21} strokeWidth={2.800} className="text-[#0a5ac8]" /> : <ChevronsDown size={big ? 24 : 21} strokeWidth={2.800} className="text-[#0a5ac8]" />}
    </span>
    <span className={`font-['Liberation_Mono'] font-bold text-[#000080] whitespace-pre ${big ? "text-[23.400px]" : "text-[20.200px]"}`}>{label}</span>
  </div>
);

const ProcessItem = ({ icon, label, selected, disabled, big }: { icon: string; label: string; selected?: boolean; disabled?: boolean; big?: boolean }) => (
  <div className={`flex items-center ${big ? "h-[36px] pl-[40px]" : "h-[31.200px] pl-[34px]"}`}>
    <I n={icon} s={big ? 30 : 27} className={disabled ? "opacity-45" : ""} />
    {selected ? (
      <span className="ml-[7px] h-[27px] w-[230px] pl-[1px] leading-[25px] bg-[#3399ff] border border-dotted border-[#111] text-white font-['Liberation_Mono'] font-bold text-[20.200px] whitespace-pre">
        {label}
      </span>
    ) : (
      <span className={`font-['Liberation_Mono'] whitespace-pre ${big ? "text-[19.900px] ml-[9px]" : "text-[17.200px] ml-[8px]"} ${disabled ? "text-[#8c8c8c]" : "text-[#111]"}`}>
        {label}
      </span>
    )}
  </div>
);

const LeftColumn = () => (
  <div className="w-[547px] bg-white flex flex-col">
    <TitleBar title="Models" icon="models" />
    <div className="h-[4px] border-b-2 border-[#a8adb5]" />
    <div className="flex border-l-2 border-[#a8adb5]">
      <Tree />
      <VScroll w="w-[27px] mr-[1px] pr-[3px]" spacer="h-[34px]" thumb="h-[14px]" />
    </div>
    <div className="h-[26px] bg-[#f2f2f2] flex items-center border-l-2 border-[#a8adb5] pl-[3px]">
      <ChevronLeft size={24} strokeWidth={3.500} className="text-[#555] shrink-0 mr-[3px]" />
      <div className="w-[369px] h-full bg-[#c8c8c8]" />
      <div className="flex-1 flex justify-end pr-[34px]">
        <ChevronRight size={24} strokeWidth={3.500} className="text-[#555]" />
      </div>
    </div>
    <div className="h-[8px] border-t-[3px] border-[#a8adb5]" />
    <Tabs
      h="h-[34px]"
      pl="pl-[5px]"
      tabs={[
        { icon: "input", label: "Input", w: "w-[100px]" },
        { icon: "models", label: "Models", w: "w-[108px]", active: true },
        { icon: "results", label: "Results", w: "w-[120px]" },
        { icon: "templates", label: "Templates", w: "w-[140px]" },
      ]}
    />
    <div className="h-[8px] bg-[#b9cff2] border-y-2 border-[#1a30a0]" />
    <TitleBar title="Processes" icon="wrench" orange />
    <div className="h-[7px] border-b-2 border-[#a8adb5]" />
    <div className="h-[343px] flex overflow-hidden border-l-2 border-[#a8adb5]">
      <div className="flex-1 pt-px">
        <Section label="Upscaling" />
        <Section label="Fracture network modeling" />
        <Section label="Well engineering" />
        <Section label="Simulation" />
        <Section label="Utilities" open />
        <ProcessItem icon="polygons" label="Make/edit polygons" selected />
        <ProcessItem icon="surface" label="Make/edit surface" />
        <ProcessItem icon="simpleGrid" label="Make simple grid" />
        <ProcessItem icon="train" label="Train estimation model" />
        <ProcessItem icon="uncertainty" label="Uncertainty and optimization" />
        <ProcessItem icon="volume" label="Volume calculation" />
      </div>
      <VScroll w="w-[26px] mr-[2px] pr-[2px]" spacer="h-[198px]" thumb="h-[105px]" />
    </div>
    <div className="h-[7px] border-t-[3px] border-[#a8adb5]" />
    <Tabs
      h="h-[33px]"
      pl="pl-[7px]"
      tabs={[
        { icon: "wrench", label: "Processes", w: "w-[138px]", active: true },
        { icon: "cases", label: "Cases", w: "w-[98px]" },
        { icon: "workflows", label: "Workflows", w: "w-[141px]" },
        { icon: "windowsTab", label: "Windows", w: "w-[120px]" },
      ]}
    />
  </div>
);

const FloatingPanel = () => (
  <div className="ml-[95px] mt-[43px] w-[518px] h-[579px] border-[3px] border-[#ff0000]">
    <div className="h-full border-2 border-white">
      <div className="h-full border border-[#ff0000]">
        <div className="h-full border border-white">
          <div className="h-full border-[6px] border-[#ff0000] flex bg-white">
            <div className="w-[5px] bg-[#5b7fc9]" />
            <div className="flex-1 flex flex-col min-w-0">
              <div className="h-[4px] bg-[#1a30a0] border-b border-white" />
              <TitleBar title="Processes" icon="wrench" orange big />
              <div className="h-[7px] border-b-2 border-[#a8adb5]" />
              <div className="h-[455px] flex overflow-hidden border-x-2 border-[#a8adb5]">
                <div className="flex-1 pt-[3px]">
                  <Section big label="Stratigraphic modeling" />
                  <Section big label="Geophysics" />
                  <Section big label="Structural modeling" open />
                  <ProcessItem big icon="defineModel" label="Define model" />
                  <ProcessItem big disabled icon="faultMod" label="Fault modeling" />
                  <ProcessItem big disabled icon="pillar" label="Pillar gridding" />
                  <ProcessItem big disabled icon="horizons" label="Make horizons" />
                  <ProcessItem big disabled icon="depth" label="Depth convert 3D grid" />
                  <ProcessItem big disabled icon="zones" label="Make zones" />
                  <ProcessItem big disabled icon="layering" label="Layering" />
                  <ProcessItem big disabled icon="edit3d" label="Edit 3D grid" />
                  <ProcessItem big disabled icon="localGrids" label="Make local grids" />
                  <ProcessItem big disabled icon="contacts" label="Make contacts" />
                </div>
                <VScroll w="w-[30px]" spacer="h-[54px]" thumb="h-[211px]" />
              </div>
              <div className="h-[5px] border-t-2 border-[#a8adb5]" />
              <Tabs
                big
                h="h-[40px]"
                pl="pl-[9px]"
                tabs={[
                  { icon: "wrench", label: "Pro...", w: "w-[119px]", active: true, lp: "-ml-[2px]" },
                  { icon: "cases", label: "Cases", w: "w-[114px]" },
                  { icon: "workflows", label: "Wor...", w: "w-[122px]" },
                  { icon: "windowsTab", label: "Wi...", w: "w-[120px]", lp: "ml-[4px]" },
                ]}
              />
            </div>
          </div>
        </div>
      </div>
    </div>
  </div>
);

type StripItem = string | null | { a: string };
const vStrip1: StripItem[] = [
  { a: "hand" }, "magnifier", "ruler", "handSurface", "arrowPlane", null, "cursor", "selectCursor", "nodeCursor",
  "__gap", "undo", "redo", "dotStar", "nodeArrow", "redArrow", "dashX", null, "pen", "scissorsBlue",
];
const vStrip2: StripItem[] = [
  "wrenchDoc", "hand123", { a: "poly" }, null, "redX", "dots", { a: "streaks" }, { a: "star" }, "starLine", "starRect", null,
  "shapeIn", "shapeOut", "dashes", "wave", "wave2", "arrowsPurple", "scissorsTri", "tShape",
];

const VToolbar = ({ items, w, h, head }: { items: StripItem[]; w: string; h: string; head: string }) => (
  <div className={`${w} ${h} pl-[3px] flex flex-col items-center rounded-t-[4px] bg-linear-to-r from-[#cfe0fa] to-[#8fb0e6] border-r-2 border-[#4c6fb0]`}>
    <div className={`${head} flex items-center gap-[3px]`}>
      {[0, 1, 2, 3, 4].map((i) => <span key={i} className="w-[3px] h-[3px] bg-[#1c3f94]" />)}
    </div>
    {items.map((it, i) => {
      if (it === "__gap") return <div key={i} className="h-[9px]" />;
      if (it === null) return <div key={i} className="h-[11px] w-[24px] flex items-center"><span className="w-full h-[2px] bg-[#eaf1fc]" /></div>;
      if (typeof it === "object")
        return (
          <div key={i} className="w-[37px] h-[37px] my-[0.500px] bg-[#fbbf74] border-2 border-[#14307a] flex items-center justify-center">
            <I n={it.a} s={28} />
          </div>
        );
      return <div key={i} className="h-[38px] flex items-center justify-center"><I n={it} s={28} /></div>;
    })}
  </div>
);

const StatusBar = () => (
  <div className="h-[34px] flex items-center pl-[5px] pr-[6px] pt-[3px] border-t-2 border-[#6f93d4] bg-linear-to-b from-[#b9cff2] to-[#a4c0ec]">
    <div className="w-[1302px] h-[28px] border border-[#8aa9dc] bg-linear-to-b from-[#bfd4f5] to-[#8fb0e6]" />
    <div className="ml-[5px] w-[32px] h-[28px] bg-linear-to-b from-[#9cbcf0] via-white to-white border-2 border-[#a9c0e6] flex items-center justify-center font-['Liberation_Sans'] font-bold text-[19px] text-black leading-none pt-[3px]">
      2
    </div>
    <div className="ml-[6px] grid grid-cols-3 gap-[3px] w-[20px]">
      {[0, 1, 2, 3, 4, 5, 6, 7, 8].map((i) => (
        <span key={i} className={`w-[3px] h-[3px] ${[0, 1, 3].includes(i) ? "" : "bg-[#1c3f94]"}`} />
      ))}
    </div>
  </div>
);

const Callout = () => (
  <div className="ml-[14px] mt-[262px] w-[380px] h-[545px] rounded-[68px] bg-[#4472c4] border-2 border-black pl-[37px] pt-[10px] font-['Noto_Sans_CJK_SC',sans-serif] text-[47.500px] leading-[57.500px] text-black whitespace-nowrap">
    <div>进程显示为灰</div>
    <div>色，则该进程</div>
    <div>不能使用。</div>
    <div>因为：</div>
    <div className="flex items-center">
      <span className="w-[16px] h-[18px] mr-[6px] rounded-full bg-[#800000]" />要求的前提
    </div>
    <div>步骤还没有完</div>
    <div>成；</div>
    <div className="flex items-center">
      <span className="w-[16px] h-[18px] mr-[6px] rounded-full bg-[#800000]" />没有有效许
    </div>
    <div>可证。</div>
  </div>
);

export default function App() {
  return (
    <div className="relative w-[1816px] h-[988px] overflow-hidden bg-white flex">
      <div className="ml-[12px] w-[1391px] flex flex-col">
        {/* top strip of the window behind */}
        <div className="h-[6px] flex">
          <div className="w-[45px] bg-white" />
          <div className="flex-1 bg-[#5b7fc9] flex justify-end pr-[21px]">
            <div className="w-[82px] h-[5px] bg-[#d5dbe6] px-[12px]">
              <div className="h-full bg-[#1fb5e8]" />
            </div>
          </div>
        </div>
        <div className="h-[971px] border-l-[10px] border-r-[7px] border-t-[7px] border-b-[5px] border-[#5b7fc9] bg-linear-to-r from-[#a0c0f0] to-[#c2d9f8] flex flex-col">
          <Menu />
          <Toolbars />
          <div className="h-[751px] mt-px flex">
            <LeftColumn />
            <div className="w-[8px] bg-[#b9cff2] border-x-2 border-[#1a30a0]" />
            <div className="w-[723px] ml-[2px] h-[748px] border-l-[6px] border-t-[6px] border-[#808080] bg-[#f0f0f0] outline-2 -outline-offset-2 outline-white">
              <FloatingPanel />
            </div>
            <div className="ml-[2px] flex items-start gap-[2px] pt-[5px]">
              <VToolbar items={vStrip1} w="w-[44px]" h="h-[660px]" head="h-[17px]" />
              <VToolbar items={vStrip2} w="w-[45px]" h="h-[688px]" head="h-[19px]" />
            </div>
          </div>
          <StatusBar />
        </div>
      </div>
      <Callout />

      {/* annotation arrows drawn over the window */}
      <div className="absolute left-[346px] top-[695px] w-[310px] h-[56px]">
        <svg width="310" height="56" viewBox="0 0 310 56" className="absolute inset-0">
          <path d="M1 14H247V1L308 28 247 55V42H1z" fill="#ccff33" stroke="#111" strokeWidth="2" />
        </svg>
        <span className="absolute left-[33px] top-[16px] font-['Liberation_Sans','Noto_Sans_CJK_SC',sans-serif] text-[21.400px] leading-[28px] whitespace-pre text-black">选中Make/edit  polygons</span>
      </div>
      <svg width="225" height="18" viewBox="0 0 225 18" className="absolute left-[1193px] top-[518px]">
        <path d="M1 9L56 1v5H225v6H56v5z" fill="#000066" stroke="#555" strokeWidth="1" />
      </svg>
      <svg width="38" height="75" viewBox="0 0 38 75" className="absolute left-[1241px] top-[858px]">
        <path d="M19 1L37 37H28V74H10V37H1z" fill="#00c000" stroke="#000" strokeWidth="1.500" />
      </svg>
    </div>
  );
}
